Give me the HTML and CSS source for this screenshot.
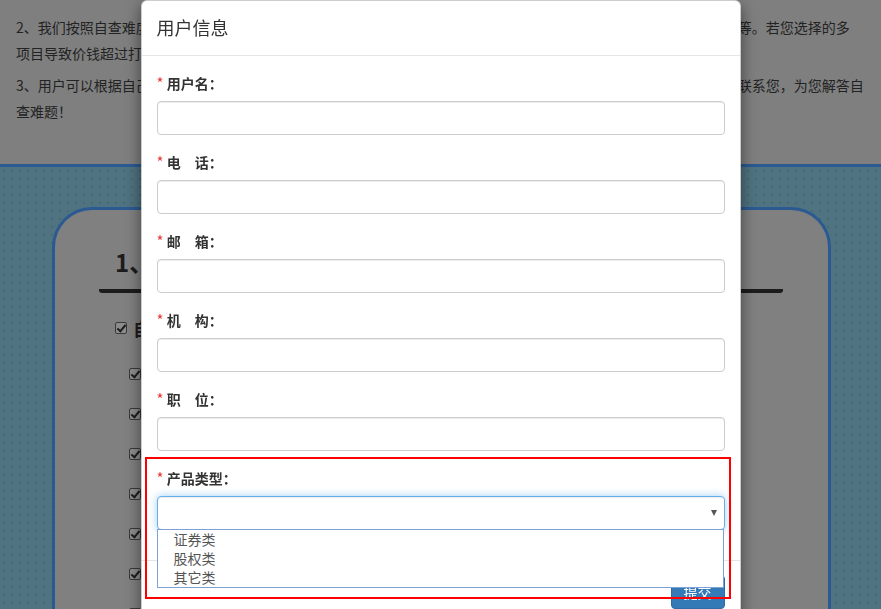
FILE: index.html
```html
<!DOCTYPE html>
<html lang="zh-CN">

<head>
    <meta charset="UTF-8">
    <meta name="viewport" content="width=device-width, initial-scale=1.0">
    <title>自查服务</title>
    <link rel="stylesheet" href="styles.css">
</head>

<body>
    <div class="page">
        <section class="intro">
            <p>2、我们按照自查难度将项目分为基础、进阶、高级三个等级，各等级对应的收费标准分别为一千元、两千元、三千元等。若您选择的多<br>项目导致价钱超过打包价格，系统将自动按照打包价格为您计算费用。</p>
            <p>3、用户可以根据自己的需求选择相应的自查项目，如有任何疑问请留言，我们的专业顾问将会在工作日第一时间主动联系您，为您解答自<br>查难题！</p>
        </section>

        <section class="board">
            <div class="card">
                <h3 class="card-title">1、自查项目选择</h3>
                <ul class="check-list">
                    <li class="check-head"><span class="box"></span>自查类别（全选）</li>
                    <li class="check-item"><span class="box"></span>公司治理</li>
                    <li class="check-item"><span class="box"></span>内部控制</li>
                    <li class="check-item"><span class="box"></span>信息披露</li>
                    <li class="check-item"><span class="box"></span>募集资金</li>
                    <li class="check-item"><span class="box"></span>关联交易</li>
                    <li class="check-item"><span class="box"></span>对外担保</li>
                    <li class="check-item"><span class="box"></span>财务核查</li>
                </ul>
            </div>
        </section>
    </div>

    <div class="modal">
        <div class="modal-dialog">
            <div class="modal-header">
                <h4 class="modal-title">用户信息</h4>
            </div>
            <div class="modal-body">
                <div class="form-group">
                    <label><span class="req">*</span> 用户名：</label>
                    <input class="form-control" type="text">
                </div>
                <div class="form-group">
                    <label><span class="req">*</span> 电　话：</label>
                    <input class="form-control" type="tel">
                </div>
                <div class="form-group">
                    <label><span class="req">*</span> 邮　箱：</label>
                    <input class="form-control" type="email">
                </div>
                <div class="form-group">
                    <label><span class="req">*</span> 机　构：</label>
                    <input class="form-control" type="text">
                </div>
                <div class="form-group">
                    <label><span class="req">*</span> 职　位：</label>
                    <input class="form-control" type="text">
                </div>
                <div class="form-group">
                    <label><span class="req">*</span> 产品类型：</label>
                    <div class="select-wrap">
                        <div class="form-control select-box"></div>
                        <span class="caret"></span>
                        <ul class="select-options">
                            <li>证券类</li>
                            <li>股权类</li>
                            <li>其它类</li>
                        </ul>
                    </div>
                </div>
            </div>
            <div class="modal-footer">
                <button class="btn-submit" type="button">提交</button>
            </div>

            <!-- annotation box -->
            <div class="highlight"></div>
        </div>
    </div>
</body>

</html>
```

FILE: styles.css
```css
* {
    box-sizing: border-box;
}

body {
    margin: 0;
    font-family: "Noto Sans CJK SC", "Noto Sans", sans-serif;
    font-size: 14px;
    color: #333;
    overflow: hidden;
}

/* background page (already dimmed by the modal backdrop) */

.page {
    background-color: #7f7f7f;
}

.intro {
    height: 167px;
    padding: 14px 16px 0;
    border-bottom: 3px solid #2b5a93;
    color: #232323;
}

.intro p {
    margin: 0 0 6px;
    line-height: 26px;
    white-space: nowrap;
}

.board {
    padding: 40px 50px 0 52px;
    height: 442px;
    background-color: #4f7380;
    background-image: radial-gradient(circle, rgba(40, 70, 85, 0.22) 1px, transparent 1.5px);
    background-size: 8px 8px;
}

.card {
    height: 420px;
    background-color: #808080;
    border: 3px solid #2b5a93;
    border-bottom: none;
    border-radius: 40px 40px 0 0;
    padding-top: 38px;
}

.card-title {
    margin: 0 45px 0 44px;
    padding: 0 0 13px 16px;
    font-size: 24px;
    line-height: 28px;
    font-weight: bold;
    color: #1c1c1c;
    border-bottom: 4px solid #1c1c1c;
    border-radius: 0 0 3px 3px;
    white-space: nowrap;
}

.check-list {
    list-style: none;
    margin: 21px 0 0;
    padding: 0 0 0 60px;
}

.check-head {
    font-size: 18px;
    font-weight: bold;
    line-height: 28px;
    margin-bottom: 12px;
    color: #1c1c1c;
    display: flex;
    align-items: center;
}

.check-item {
    line-height: 40px;
    padding-left: 14px;
    display: flex;
    align-items: center;
    color: #1c1c1c;
}

.box {
    width: 12px;
    height: 12px;
    margin-right: 6px;
    border: 1px solid #3a3a3a;
    border-radius: 2px;
    background-color: #8c8c8c;
    position: relative;
    flex-shrink: 0;
}

.box::after {
    content: "";
    position: absolute;
    left: 3px;
    top: 0px;
    width: 3px;
    height: 7px;
    border: solid #1e1e1e;
    border-width: 0 2px 2px 0;
    transform: rotate(40deg);
}

/* modal */

.modal {
    position: fixed;
    top: 0;
    left: 0;
    right: 0;
    bottom: 0;
}

.modal-dialog {
    position: relative;
    width: 600px;
    margin: 0 auto;
    background-color: #fff;
    border: 1px solid rgba(0, 0, 0, 0.2);
    border-radius: 6px;
    box-shadow: 0 5px 15px rgba(0, 0, 0, 0.5);
}

.modal-header {
    padding: 13px 15px 15px;
    border-bottom: 1px solid #e5e5e5;
}

.modal-title {
    margin: 0;
    font-size: 18px;
    line-height: 26px;
    font-weight: normal;
    color: #333;
}

.modal-body {
    padding: 17px 15px 13px;
}

.form-group {
    margin-bottom: 17px;
}

.form-group label {
    display: block;
    margin-bottom: 8px;
    line-height: 20px;
    font-weight: bold;
    color: #333;
}

.req {
    color: #e53935;
    font-weight: normal;
    font-size: 15px;
}

.form-control {
    display: block;
    width: 100%;
    height: 34px;
    padding: 6px 12px;
    font-size: 14px;
    font-family: inherit;
    color: #555;
    background-color: #fff;
    border: 1px solid #ccc;
    border-radius: 4px;
    box-shadow: inset 0 1px 1px rgba(0, 0, 0, 0.075);
}

.select-wrap {
    position: relative;
}

.select-box {
    border-color: #66afe9;
    box-shadow: inset 0 1px 1px rgba(0, 0, 0, 0.075), 0 0 8px rgba(102, 175, 233, 0.6);
}

.caret {
    position: absolute;
    right: 8px;
    top: 14px;
    width: 0;
    height: 0;
    border-left: 3.5px solid transparent;
    border-right: 3.5px solid transparent;
    border-top: 6px solid #555;
}

.select-options {
    position: absolute;
    left: 0;
    top: 33px;
    width: 567px;
    margin: 0;
    padding: 0;
    list-style: none;
    background-color: #fff;
    border: 1px solid #7ea1d6;
    z-index: 2;
}

.select-options li {
    line-height: 19px;
    padding-left: 16px;
    color: #555;
}

.modal-footer {
    padding: 14px 15px 15px;
    border-top: 1px solid #e5e5e5;
    text-align: right;
}

.btn-submit {
    height: 34px;
    padding: 6px 12px;
    font-size: 14px;
    font-family: inherit;
    color: #fff;
    background-color: #337ab7;
    border: 1px solid #2e6da4;
    border-radius: 4px;
}

.highlight {
    position: absolute;
    left: 3px;
    top: 456px;
    width: 586px;
    height: 142px;
    border: 2px solid #f00;
    z-index: 3;
    pointer-events: none;
}
```
